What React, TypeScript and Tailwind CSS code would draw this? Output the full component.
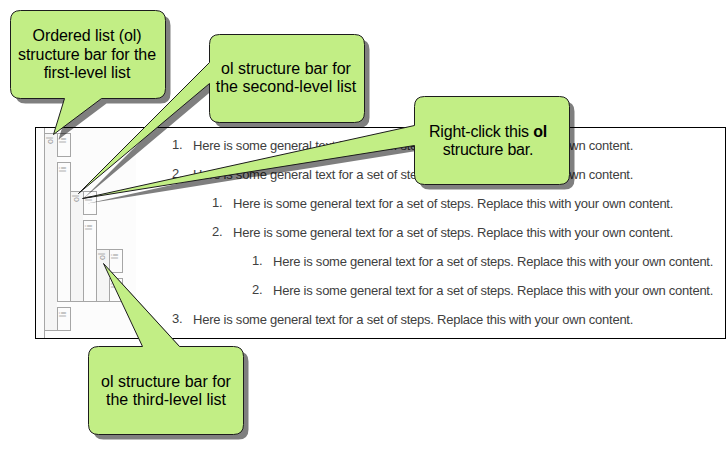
import { Fragment, type ReactNode } from "react";

const SENTENCE =
  "Here is some general text for a set of steps. Replace this with your own content.";

type Item = { id: string; children?: Item[] };

const items: Item[] = [
  { id: "1" },
  {
    id: "2",
    children: [{ id: "2.1" }, { id: "2.2", children: [{ id: "2.2.1" }, { id: "2.2.2" }] }],
  },
  { id: "3" },
];

function Label({ children }: { children: string }) {
  return (
    <span
      className={`block rotate-180 text-[9px] leading-[11px] text-[#999] [writing-mode:vertical-rl] ${
        children === "li" ? "tracking-[1px]" : "tracking-normal"
      }`}
    >
      {children}
    </span>
  );
}

function ListBar({ list }: { list: Item[] }) {
  return (
    <div className="flex">
      <div className="w-[13px] border-y border-l border-[#a6a6a6] bg-[#f5f5f5] pt-[3px]">
        <Label>ol</Label>
      </div>
      <div className="flex flex-col gap-[5px]">
        {list.map((item) => (
          <div key={item.id} className="flex">
            <div
              className={
                item.children
                  ? "w-[13px] border-y border-l border-[#a6a6a6] bg-[#fcfcfc] pt-[3px] shadow-[1px_0_0_#a6a6a6]"
                  : "h-6 w-[14px] border border-[#a6a6a6] bg-[#fcfcfc] pt-[3px]"
              }
            >
              <Label>li</Label>
            </div>
            {item.children && (
              <div className="pt-[29px]">
                <ListBar list={item.children} />
              </div>
            )}
          </div>
        ))}
      </div>
    </div>
  );
}

function Steps({ list, nested }: { list: Item[]; nested?: boolean }) {
  return (
    <ol className={nested ? "pl-10" : ""}>
      {list.map((item, i) => (
        <Fragment key={item.id}>
          <li className="flex h-[29px] items-center whitespace-nowrap">
            <span className="w-[21px] pb-[2px]">{i + 1}.</span>
            <span>{SENTENCE}</span>
          </li>
          {item.children && <Steps list={item.children} nested />}
        </Fragment>
      ))}
    </ol>
  );
}

const shapes = [
  "M20 10H155Q165 10 165 20V88Q165 98 155 98H101L53 134L64 98H20Q10 98 10 88V20Q10 10 20 10Z",
  "M219 34H354Q364 34 364 44V112Q364 122 354 122H219Q209 122 209 112V83L78 193L209 62V44Q209 34 219 34Z",
  "M424 96H559Q569 96 569 106V174Q569 184 559 184H424Q414 184 414 174V145L82 198L414 125V106Q414 96 424 96Z",
  "M98 346H142L103 263L179 346H233Q243 346 243 356V424Q243 434 233 434H98Q88 434 88 424V356Q88 346 98 346Z",
];

function Caption({ place, children }: { place: string; children: ReactNode }) {
  return (
    <div
      className={`absolute flex h-[88px] w-[156px] items-center justify-center text-center text-[16px] leading-[18.5px] whitespace-nowrap text-black ${place}`}
    >
      <p>{children}</p>
    </div>
  );
}

export default function App() {
  return (
    <main className="relative h-[449px] w-[726px] overflow-hidden bg-white pt-[127px] pl-[35px] font-['Liberation_Sans',Arial,sans-serif]">
      <section className="flex h-[212px] w-[691px] border border-black">
        <div className="flex w-[100px] bg-[#fcfcfc]">
          <div className="w-2" />
          <div className="border-l border-[#a6a6a6]">
            <div className="-ml-px pt-[5px]">
              <ListBar list={items} />
            </div>
          </div>
        </div>
        <div className="pt-[3px] pl-[36px] text-[13px] tracking-[-0.24px] text-[#404040]">
          <Steps list={items} />
        </div>
      </section>
      <svg className="absolute inset-0" width="726" height="449" viewBox="0 0 726 449">
        {shapes.map((d) => (
          <g key={d}>
            <path d={d} transform="translate(5.5 5.5)" fill="#000" fillOpacity="0.5" />
            <path d={d} transform="translate(.5 .5)" fill="#c2ee85" stroke="#1c1c1c" />
          </g>
        ))}
      </svg>
      <Caption place="left-[9px] top-[11px] tracking-[-0.08px]">
        Ordered list (ol)
        <br />
        structure bar for the
        <br />
        first-level list
      </Caption>
      <Caption place="left-[208px] top-[34px]">
        ol structure bar for
        <br />
        the second-level list
      </Caption>
      <Caption place="left-[410px] top-[97px] tracking-[-0.2px]">
        Right-click this <b>ol</b>
        <br />
        structure bar.
      </Caption>
      <Caption place="left-[88px] top-[347px]">
        ol structure bar for
        <br />
        the third-level list
      </Caption>
    </main>
  );
}
